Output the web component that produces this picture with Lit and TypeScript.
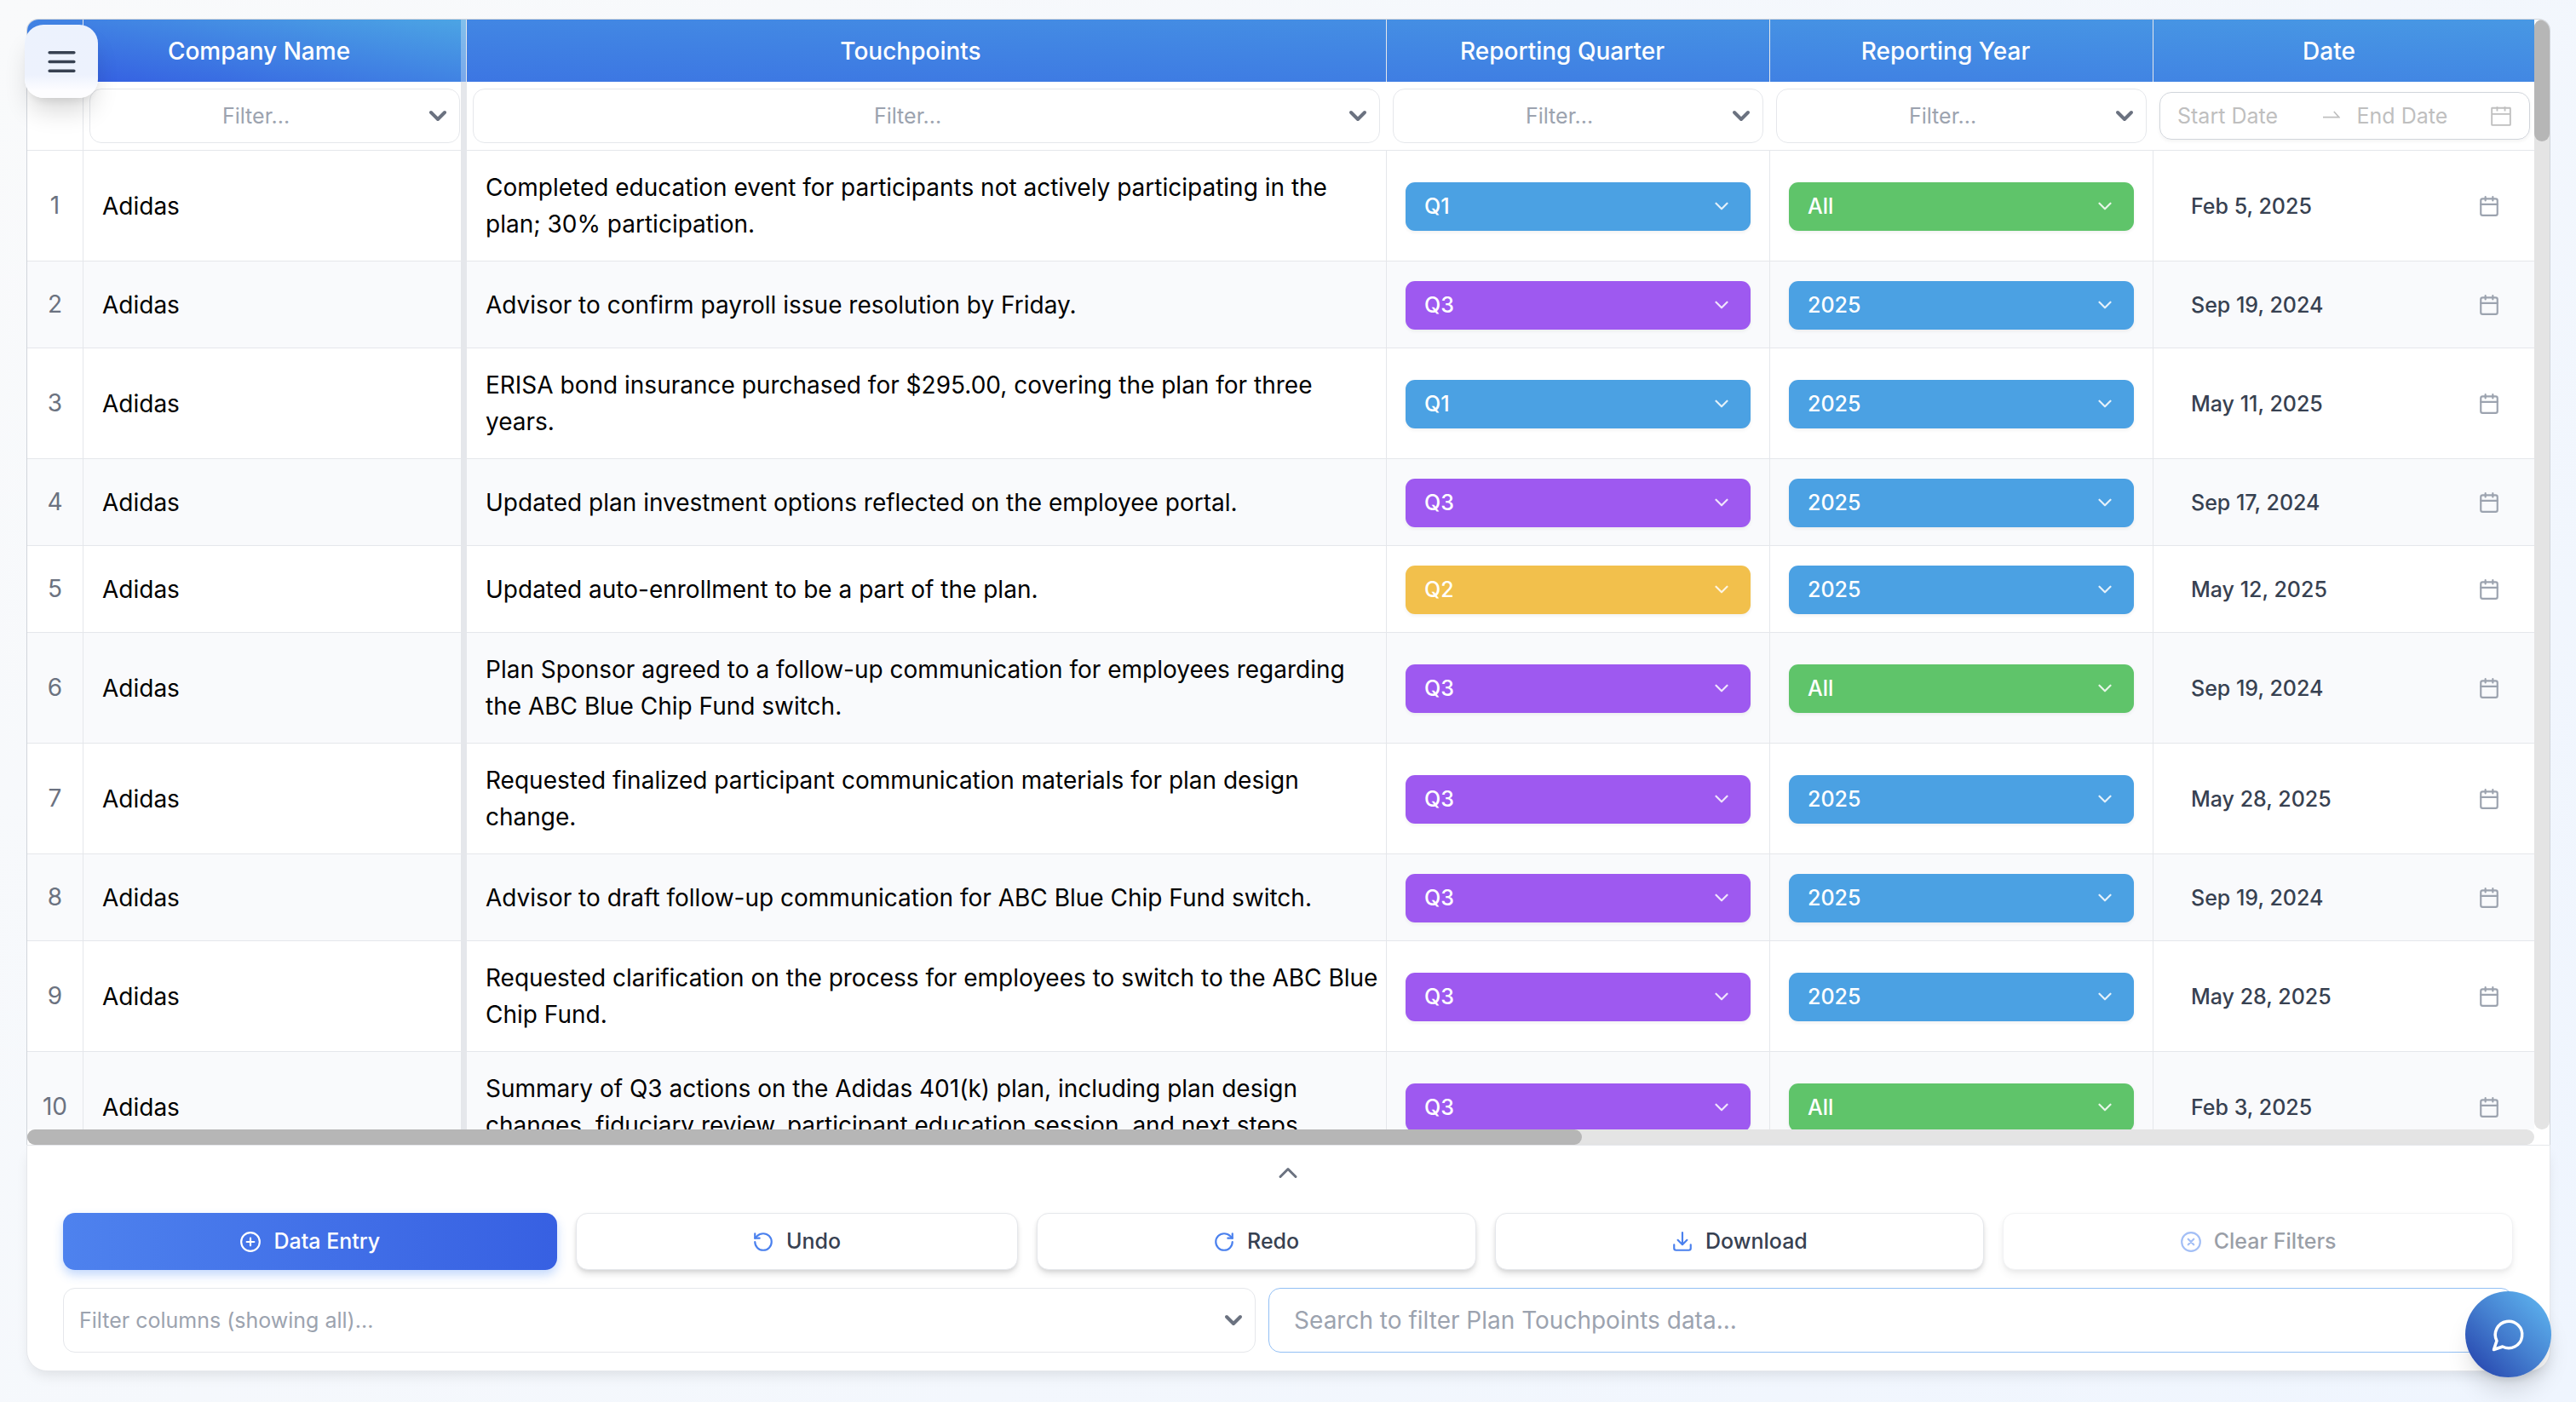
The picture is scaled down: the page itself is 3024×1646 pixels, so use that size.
import { LitElement, html, css, svg } from "lit";
import { customElement, property } from "lit/decorators.js";
import { classMap } from "lit/directives/class-map.js";

type Tone = "blue" | "green" | "purple" | "amber";

interface Row {
  company: string;
  touchpoint: string;
  quarter: string;
  year: string;
  date: string;
}

const ROWS: Row[] = [
  {
    company: "Adidas",
    touchpoint:
      "Completed education event for participants not actively participating in the plan; 30% participation.",
    quarter: "Q1",
    year: "All",
    date: "Feb 5, 2025",
  },
  {
    company: "Adidas",
    touchpoint: "Advisor to confirm payroll issue resolution by Friday.",
    quarter: "Q3",
    year: "2025",
    date: "Sep 19, 2024",
  },
  {
    company: "Adidas",
    touchpoint:
      "ERISA bond insurance purchased for $295.00, covering the plan for three years.",
    quarter: "Q1",
    year: "2025",
    date: "May 11, 2025",
  },
  {
    company: "Adidas",
    touchpoint: "Updated plan investment options reflected on the employee portal.",
    quarter: "Q3",
    year: "2025",
    date: "Sep 17, 2024",
  },
  {
    company: "Adidas",
    touchpoint: "Updated auto-enrollment to be a part of the plan.",
    quarter: "Q2",
    year: "2025",
    date: "May 12, 2025",
  },
  {
    company: "Adidas",
    touchpoint:
      "Plan Sponsor agreed to a follow-up communication for employees regarding the ABC Blue Chip Fund switch.",
    quarter: "Q3",
    year: "All",
    date: "Sep 19, 2024",
  },
  {
    company: "Adidas",
    touchpoint:
      "Requested finalized participant communication materials for plan design change.",
    quarter: "Q3",
    year: "2025",
    date: "May 28, 2025",
  },
  {
    company: "Adidas",
    touchpoint: "Advisor to draft follow-up communication for ABC Blue Chip Fund switch.",
    quarter: "Q3",
    year: "2025",
    date: "Sep 19, 2024",
  },
  {
    company: "Adidas",
    touchpoint:
      "Requested clarification on the process for employees to switch to the ABC Blue Chip Fund.",
    quarter: "Q3",
    year: "2025",
    date: "May 28, 2025",
  },
  {
    company: "Adidas",
    touchpoint:
      "Summary of Q3 actions on the Adidas 401(k) plan, including plan design changes, fiduciary review, participant education session, and next steps.",
    quarter: "Q3",
    year: "All",
    date: "Feb 3, 2025",
  },
];

const TONES: Record<string, Tone> = {
  Q1: "blue",
  Q2: "amber",
  Q3: "purple",
  All: "green",
  "2025": "blue",
};

const COLUMNS = ["Company Name", "Touchpoints", "Reporting Quarter", "Reporting Year"];

/* 24-unit stroke icons */
const ICONS = {
  menu: svg`<path d="M4 6h16M4 12h16M4 18h16"/>`,
  calendar: svg`<rect x="3" y="4" width="18" height="18" rx="2"/><path d="M8 2v4M16 2v4M3 10h18"/>`,
  range: svg`<rect x="2" y="3.5" width="20" height="18.5" rx="0.4"/><path d="M7.8 2v5M16.2 2v5M2 10h20" stroke-linecap="butt"/>`,
  plus: svg`<circle cx="12" cy="12" r="10"/><path d="M8 12h8M12 8v8"/>`,
  clear: svg`<circle cx="12" cy="12" r="10"/><path d="m15 9-6 6M9 9l6 6"/>`,
  undo: svg`<path d="M3 12a9 9 0 1 0 9-9 9.75 9.75 0 0 0-6.74 2.74L3 8"/><path d="M3 3v5h5"/>`,
  redo: svg`<path d="M21 12a9 9 0 1 1-9-9c2.52 0 4.93 1 6.74 2.74L21 8"/><path d="M21 3v5h-5"/>`,
  download: svg`<path d="M21 15v4a2 2 0 0 1-2 2H5a2 2 0 0 1-2-2v-4"/><path d="M7 10l5 5 5-5M12 15V2"/>`,
  chat: svg`<path d="M7.9 20A9 9 0 1 0 4 16.1L2 22Z"/>`,
  down: svg`<path d="m6 9 6 6 6-6"/>`,
  up: svg`<path d="m6 15 6-6 6 6"/>`,
  swap: svg`<path d="M0 14h22.6l-7.2-8" stroke-linecap="butt" stroke-linejoin="miter"/>`,
};

type IconName = keyof typeof ICONS;

@customElement("ui-icon")
export class UiIcon extends LitElement {
  @property() name: IconName = "menu";

  static styles = css`
    :host {
      display: block;
      flex: none;
      width: 26px;
      height: 26px;
      pointer-events: none;
    }
    .glyph {
      display: block;
      width: 100%;
      height: 100%;
      fill: none;
      stroke: currentColor;
      stroke-width: var(--icon-stroke, 2);
      stroke-linecap: round;
      stroke-linejoin: round;
    }
  `;

  render() {
    return html`<svg class="glyph" viewBox="0 0 24 24" aria-hidden="true">${ICONS[this.name]}</svg>`;
  }
}

@customElement("app-root")
export class AppRoot extends LitElement {
  static styles = css`
    :host {
      display: flex;
      flex-direction: column;
      box-sizing: border-box;
      height: 100vh;
      padding: 22px 30px 36px 31px;
      background: linear-gradient(135deg, #f9fafb 0%, #eff5fe 100%);
      color: #000;
      font-family: Inter, "Liberation Sans", sans-serif;
      font-size: 28px;
      line-height: 43px;
    }

    *,
    *::before {
      box-sizing: border-box;
    }

    button,
    input,
    select {
      margin: 0;
      font: inherit;
      color: inherit;
      background: none;
      border: 0;
      outline: 0;
      appearance: none;
      min-width: 0;
    }

    button {
      cursor: pointer;
    }

    /* ---- grid frame ---- */
    .frame {
      flex: 1 1 0;
      min-height: 0;
      display: grid;
      grid-template-columns: minmax(0, 1fr) 18px;
      grid-template-rows: minmax(0, 1fr) 18px;
      background: #fff;
      border: 1px solid #d1d5db;
      border-bottom: 0;
      border-radius: 14px 14px 0 0;
      overflow: hidden;
    }

    .viewport {
      overflow: hidden;
    }

    .track {
      background: #e4e4e4;
      border-radius: 9px;
    }

    .thumb {
      background: #b6b6b6;
      border-radius: 9px;
    }

    .track-y .thumb {
      height: 11%;
    }

    .track-x .thumb {
      width: 62%;
      height: 100%;
    }

    .grid {
      width: calc(100% + 3px);
      table-layout: fixed;
      border-collapse: separate;
      border-spacing: 0;
    }

    .col-index {
      width: 66px;
    }

    .col-fixed {
      width: 450px;
    }

    th,
    td {
      padding: 0;
      font-weight: 400;
    }

    .titles {
      background: linear-gradient(to top right, #3560e2, #4ca5e4) 0 0 / 161% 210% no-repeat;
    }

    .title {
      height: 73px;
      padding: 2px 37px 0 0;
      border-right: 1px solid #e5e7eb;
      color: #fff;
      font-weight: 500;
      text-align: center;
    }

    .title-index {
      padding: 0;
    }

    .title-pinned {
      background: linear-gradient(to top right, #3560e2, #4ca5e4) border-box;
      box-shadow: inset -6px 0 rgba(255, 255, 255, 0.3);
    }

    .filter {
      height: 81px;
      padding: 0 8px 0 7px;
      border-bottom: 1px solid #e5e7eb;
    }

    .filter-index {
      border-right: 1px solid #e5e7eb;
    }

    .filter-pinned {
      border-right: 7px solid #e5e7eb;
      padding: 0 1px 0 7px;
    }

    /* select with its arrow stacked in the same grid cell */
    .picker {
      display: grid;
      grid-template-columns: minmax(0, 1fr);
      align-items: center;
    }

    .picker > * {
      grid-area: 1 / 1;
    }

    .picker > ui-icon {
      justify-self: end;
    }

    .picker-filter select {
      height: 64px;
      padding: 0 52px 0 8px;
      border: 1px solid #e5e7eb;
      border-radius: 14px;
      color: #9ca3af;
      font-size: 25px;
      text-align: center;
      text-align-last: center;
    }

    .picker-filter ui-icon,
    .picker-columns ui-icon {
      width: 32px;
      height: 32px;
      margin-right: 10px;
      color: #6b7280;
      --icon-stroke: 3;
    }

    .range {
      display: flex;
      align-items: center;
      gap: 20px;
      height: 56px;
      padding: 0 20px;
      border: 1px solid #d1d5db;
      border-radius: 14px;
      color: #bfbfbf;
      font-size: 25px;
      box-shadow: 0 2px 4px rgba(0, 0, 0, 0.05);
    }

    .range input {
      flex: 1 1 0;
      padding: 0;
    }

    .range .swap {
      width: 20px;
      height: 20px;
    }

    .range .range-icon {
      margin-left: -14px;
      --icon-stroke: 1.7;
    }

    input::placeholder {
      color: inherit;
      opacity: 1;
    }

    .cell {
      height: 102px;
      padding: 22px 22px 21px;
      border-right: 1px solid #e5e7eb;
      border-bottom: 1px solid #e5e7eb;
      text-align: left;
      vertical-align: middle;
    }

    .row-alt .cell {
      background: #f9fafc;
    }

    .cell-index {
      padding: 0;
      color: #6b7280;
      text-align: center;
    }

    .cell-pinned {
      border-right-width: 7px;
    }

    .cell-note {
      padding-right: 8px;
    }

    .picker-tag {
      border-radius: 11px;
      color: #fff;
      box-shadow: 0 2px 4px rgba(0, 0, 0, 0.06);
      font-size: 25px;
      font-weight: 500;
    }

    .picker-tag select {
      height: 57px;
      padding: 0 60px 0 22px;
    }

    .picker-tag select option {
      color: #000;
    }

    .picker-tag ui-icon {
      width: 26px;
      height: 26px;
      margin-right: 21px;
      --icon-stroke: 2;
      opacity: 0.85;
    }

    .blue {
      background: #4ba1e3;
    }
    .green {
      background: #5fc46a;
    }
    .purple {
      background: #9e59f0;
    }
    .amber {
      background: #f2c04c;
    }

    .date {
      display: flex;
      align-items: center;
      padding: 0 20px 0 22px;
      color: #374151;
      font-size: 25px;
      font-weight: 500;
    }

    .date input {
      flex: 1 1 0;
      padding: 0;
    }

    .date ui-icon {
      color: #9ca3af;
    }

    /* ---- bottom panel ---- */
    .panel {
      display: flex;
      flex-direction: column;
      padding: 0 43px 21px 42px;
      background: #fff;
      border: 1px solid #e5e7eb;
      border-radius: 0 0 24px 24px;
      box-shadow: 0 8px 16px -4px rgba(0, 0, 0, 0.1);
    }

    .toggle {
      align-self: center;
      display: grid;
      place-items: center;
      width: 80px;
      height: 64px;
      margin-bottom: 15px;
      color: #6b7280;
    }

    .toggle ui-icon {
      width: 36px;
      height: 36px;
      --icon-stroke: 2;
    }

    .actions {
      display: flex;
      gap: 22px;
    }

    .action {
      flex: 1 1 auto;
      display: flex;
      align-items: center;
      justify-content: center;
      gap: 14px;
      height: 67px;
      border: 1px solid #e5e7eb;
      border-radius: 14px;
      background: #fff;
      color: #374151;
      font-size: 25px;
      font-weight: 500;
      box-shadow: 0 6px 10px -2px rgba(0, 0, 0, 0.12), 0 2px 4px rgba(0, 0, 0, 0.08);
    }

    .action ui-icon {
      color: #4a80ee;
    }

    .action-primary {
      border-color: transparent;
      background: linear-gradient(to right, #4e82ee, #3760e2) border-box;
      color: #fff;
      box-shadow: 0 6px 12px rgba(59, 130, 246, 0.3);
    }

    .action-primary ui-icon {
      color: inherit;
    }

    .action:disabled {
      opacity: 0.5;
      cursor: default;
    }

    .searches {
      display: grid;
      grid-template-columns: 23fr 24fr;
      gap: 15px;
      margin-top: 21px;
    }

    .picker-columns select {
      height: 76px;
      padding: 0 60px 0 18px;
      border: 1px solid #e5e7eb;
      border-radius: 14px;
      color: #9ca3af;
      font-size: 25px;
    }

    .search {
      height: 76px;
      padding: 0 29px;
      border: 1px solid #93c0f5;
      border-radius: 14px;
      color: #9ca3af;
    }

    /* ---- floating buttons ---- */
    .menu,
    .chat {
      position: fixed;
      display: grid;
      place-items: center;
    }

    .menu {
      top: 29px;
      left: 29px;
      width: 86px;
      height: 86px;
      padding: 0;
      border-radius: 22px;
      background: linear-gradient(#ecf2fd 0%, #edf2fd 68%, #fdfdff 90%);
      box-shadow: 0 20px 30px -6px rgba(0, 0, 0, 0.16), 0 8px 12px -6px rgba(0, 0, 0, 0.1);
      color: #374151;
    }

    .menu ui-icon {
      width: 43px;
      height: 43px;
    }

    .chat {
      right: 29px;
      bottom: 29px;
      width: 101px;
      height: 101px;
      padding: 0;
      border-radius: 50%;
      background: linear-gradient(to top right, #2746ae 8%, #4580d0 50%, #5db2ee 92%);
      box-shadow: 0 20px 30px -6px rgba(0, 0, 0, 0.14), 0 8px 12px -6px rgba(0, 0, 0, 0.1);
      color: #fff;
    }

    .chat ui-icon {
      width: 42px;
      height: 42px;
    }
  `;

  private filterPicker(label: string) {
    return html`<div class="picker picker-filter">
      <select aria-label="Filter ${label}">
        <option>Filter...</option>
      </select>
      <ui-icon name="down"></ui-icon>
    </div>`;
  }

  private tagPicker(label: string, value: string, options: string[]) {
    const tone = TONES[value];
    return html`<div class=${classMap({ picker: true, "picker-tag": true, [tone]: true })}>
      <select aria-label=${label}>
        ${options.map((o) => html`<option ?selected=${o === value}>${o}</option>`)}
      </select>
      <ui-icon name="down"></ui-icon>
    </div>`;
  }

  private row(row: Row, index: number) {
    const n = index + 1;
    return html`<tr class=${index % 2 ? "row-alt" : "row"}>
      <th class="cell cell-index" scope="row">${n}</th>
      <td class="cell cell-pinned">${row.company}</td>
      <td class="cell cell-note">${row.touchpoint}</td>
      <td class="cell">
        ${this.tagPicker(`Reporting quarter, row ${n}`, row.quarter, ["Q1", "Q2", "Q3", "Q4"])}
      </td>
      <td class="cell">
        ${this.tagPicker(`Reporting year, row ${n}`, row.year, ["All", "2024", "2025"])}
      </td>
      <td class="cell">
        <label class="date">
          <input type="text" aria-label="Date, row ${n}" .value=${row.date} />
          <ui-icon name="calendar"></ui-icon>
        </label>
      </td>
    </tr>`;
  }

  private action(icon: IconName, label: string, primary = false, disabled = false) {
    return html`<button
      type="button"
      class=${classMap({ action: true, "action-primary": primary })}
      ?disabled=${disabled}
    >
      <ui-icon name=${icon}></ui-icon>${label}
    </button>`;
  }

  render() {
    return html`
      <main class="frame">
        <div class="viewport">
          <table class="grid">
            <colgroup>
              <col class="col-index" />
              <col class="col-fixed" />
              <col />
              <col class="col-fixed" />
              <col class="col-fixed" />
              <col class="col-fixed" />
            </colgroup>
            <thead>
              <tr class="titles">
                <td class="title title-index"></td>
                ${COLUMNS.map(
                  (c, i) => html`<th class=${i ? "title" : "title title-pinned"} scope="col">${c}</th>`,
                )}
                <th class="title" scope="col">Date</th>
              </tr>
              <tr>
                <td class="filter filter-index"></td>
                ${COLUMNS.map(
                  (c, i) =>
                    html`<td class=${i ? "filter" : "filter filter-pinned"}>${this.filterPicker(c)}</td>`,
                )}
                <td class="filter">
                  <div class="range">
                    <input type="text" aria-label="Start date" placeholder="Start Date" />
                    <ui-icon class="swap" name="swap"></ui-icon>
                    <input type="text" aria-label="End date" placeholder="End Date" />
                    <ui-icon class="range-icon" name="range"></ui-icon>
                  </div>
                </td>
              </tr>
            </thead>
            <tbody>
              ${ROWS.map((r, i) => this.row(r, i))}
            </tbody>
          </table>
        </div>
        <div class="track track-y"><div class="thumb"></div></div>
        <div class="track track-x"><div class="thumb"></div></div>
      </main>

      <section class="panel">
        <button type="button" class="toggle" aria-label="Collapse panel">
          <ui-icon name="up"></ui-icon>
        </button>
        <div class="actions">
          ${this.action("plus", "Data Entry", true)} ${this.action("undo", "Undo")}
          ${this.action("redo", "Redo")} ${this.action("download", "Download")}
          ${this.action("clear", "Clear Filters", false, true)}
        </div>
        <div class="searches">
          <div class="picker picker-columns">
            <select aria-label="Filter columns">
              <option>Filter columns (showing all)...</option>
            </select>
            <ui-icon name="down"></ui-icon>
          </div>
          <input
            class="search"
            type="search"
            aria-label="Search Plan Touchpoints"
            placeholder="Search to filter Plan Touchpoints data..."
          />
        </div>
      </section>

      <button type="button" class="menu" aria-label="Open menu"><ui-icon name="menu"></ui-icon></button>
      <button type="button" class="chat" aria-label="Open chat"><ui-icon name="chat"></ui-icon></button>
    `;
  }
}
